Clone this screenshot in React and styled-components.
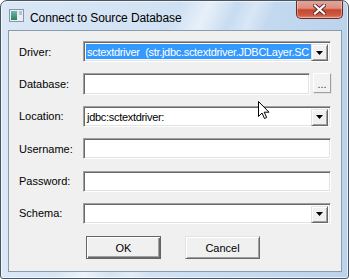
import styled, { createGlobalStyle } from "styled-components";

const Global = createGlobalStyle`
  html, body {
    margin: 0;
    padding: 0;
    background: #fff;
  }
  * {
    box-sizing: border-box;
  }
`;

/* Moldura da janela no estilo Aero */
const SJanela = styled.div`
  position: relative;
  width: 349px;
  height: 279px;
  border: 1px solid #4a5561;
  border-radius: 7px 7px 3px 3px;
  padding: 0 6px 6px 7px;
  display: flex;
  flex-direction: column;
  background:
    linear-gradient(115deg, transparent 38%, rgba(255, 255, 255, 0.55) 44%, transparent 50%,
      rgba(255, 255, 255, 0.35) 54%, transparent 58%),
    linear-gradient(90deg, #d9e7f6 0%, #d3e3f4 40%, #c6dbf1 70%, #bcd3ec 100%);
  box-shadow: inset 0 0 0 1px rgba(255, 255, 255, 0.6);
  font-family: "Liberation Sans", Arial, sans-serif;
  overflow: hidden;
`;

const STitulo = styled.div`
  height: 29px;
  display: flex;
  align-items: flex-start;
`;

const STexto = styled.span`
  font-size: 12px;
  color: #000;
  margin: 10px 0 0 22px;
  letter-spacing: -0.1px;
`;

const SIcone = styled.svg`
  position: absolute;
  left: 8px;
  top: 8px;
`;

const SFechar = styled.div`
  margin-left: auto;
  margin-right: -1px;
  width: 47px;
  height: 19px;
  margin-top: -1px;
  border: 1px solid #6b2a22;
  border-top: none;
  border-radius: 0 0 5px 5px;
  background: linear-gradient(180deg, #e8a597 0%, #dc8f80 45%, #c7462f 55%, #cf5a43 85%, #e0907c 100%);
  box-shadow: inset 0 0 0 1px rgba(255, 255, 255, 0.35);
  display: flex;
  align-items: center;
  justify-content: center;
`;

/* Area cliente do dialogo */
const SCliente = styled.div`
  flex: 1;
  background: #f0f0f0;
  border: 1px solid #8a9bae;
  padding: 10px 10px 12px 10px;
  display: flex;
  flex-direction: column;
`;

const SForm = styled.div`
  display: grid;
  grid-template-columns: 64px minmax(0, 1fr);
  grid-auto-rows: 21px;
  row-gap: 11.4px;
  align-items: center;
`;

const SLabel = styled.label`
  font-size: 11px;
  color: #000;
`;

const SCampo = styled.div`
  height: 21px;
  min-width: 0;
  display: flex;
  gap: ${(p) => (p.$gap ? "3px" : "0")};
`;

const SAfundado = styled.div`
  flex: 1;
  min-width: 0;
  height: ${(p) => (p.$alto ? "22px" : "21px")};
  background: #fff;
  border: 1px solid;
  border-color: #a0a0a0 #fff #fff #a0a0a0;
  box-shadow: inset 1px 1px 0 #696969, inset -1px -1px 0 #e3e3e3;
  padding: 2px;
  display: flex;
  font-size: 11px;
  color: #000;
`;

const SValor = styled.div`
  flex: 1;
  min-width: 0;
  white-space: pre;
  overflow: hidden;
  line-height: 17px;
  padding-left: 1px;
  letter-spacing: -0.3px;
  background: ${(p) => (p.$selecionado ? "#3399ff" : "transparent")};
  color: ${(p) => (p.$selecionado ? "#fff" : "#000")};
`;

const SSeta = styled.div`
  flex: none;
  width: 17px;
  height: 17px;
  background: #f0f0f0;
  border: 1px solid;
  border-color: #e3e3e3 #696969 #696969 #e3e3e3;
  box-shadow: inset 1px 1px 0 #fff, inset -1px -1px 0 #a0a0a0;
  display: flex;
  align-items: center;
  justify-content: center;
`;

const SReticencias = styled.div`
  flex: none;
  width: 18px;
  height: 20px;
  background: #f2f2f2;
  border: 1px solid;
  border-color: #fff #a0a0a0 #a0a0a0 #fff;
  box-shadow: 1px 1px 0 #e3e3e3;
  font-size: 11px;
  color: #7a1470;
  display: flex;
  align-items: flex-end;
  justify-content: center;
  line-height: 12px;
  padding-bottom: 2px;
`;

const SBotoes = styled.div`
  margin-top: auto;
  display: flex;
  gap: 24px;
  padding-left: 67px;
`;

const SBotao = styled.div`
  width: 75px;
  height: 23px;
  background: #f0f0f0;
  border: 1px solid;
  border-color: ${(p) => (p.$padrao ? "#646464" : "#e3e3e3 #696969 #696969 #e3e3e3")};
  box-shadow: ${(p) =>
    p.$padrao
      ? "inset 1px 1px 0 #fff, inset -1px -1px 0 #696969, inset -2px -2px 0 #a0a0a0"
      : "inset 1px 1px 0 #fff, inset -1px -1px 0 #a0a0a0"};
  font-size: 11px;
  color: #000;
  display: flex;
  align-items: center;
  justify-content: center;
`;

const SCursor = styled.svg`
  position: absolute;
  left: 256px;
  top: 99px;
`;

function Seta() {
  return (
    <svg width="7" height="4" viewBox="0 0 7 4">
      <path d="M0 0h7L3.5 4z" fill="#000" />
    </svg>
  );
}

function Combo({ valor, selecionado }) {
  return (
    <SCampo>
      <SAfundado>
        <SValor $selecionado={selecionado}>{valor}</SValor>
        <SSeta>
          <Seta />
        </SSeta>
      </SAfundado>
    </SCampo>
  );
}

function Texto() {
  return (
    <SCampo>
      <SAfundado />
    </SCampo>
  );
}

export default function App() {
  return (
    <>
      <Global />
      <SJanela>
        <SIcone width="15" height="13" viewBox="0 0 15 13">
          <defs>
            <linearGradient id="ic" x1="0" y1="0" x2="0" y2="1">
              <stop offset="0" stopColor="#6fb7b0" />
              <stop offset="1" stopColor="#2f7f5a" />
            </linearGradient>
          </defs>
          <rect x="0.5" y="0.5" width="14" height="12" fill="#e8eef4" stroke="#8a96a3" />
          <rect x="2" y="2" width="6" height="9" fill="url(#ic)" />
          <rect x="10" y="2" width="3" height="4" fill="#b9c3cc" />
        </SIcone>
        <STitulo>
          <STexto>Connect to Source Database</STexto>
          <SFechar>
            <svg width="13" height="11" viewBox="0 0 13 11">
              <path d="M2 1.5l9 8M11 1.5l-9 8" stroke="#5b2a24" strokeWidth="4" strokeLinecap="square" />
              <path d="M2 1.5l9 8M11 1.5l-9 8" stroke="#fff" strokeWidth="2.2" strokeLinecap="square" />
            </svg>
          </SFechar>
        </STitulo>
        <SCliente>
          <SForm>
            <SLabel>Driver:</SLabel>
            <Combo valor="sctextdriver  (str.jdbc.sctextdriver.JDBCLayer.SC" selecionado />
            <SLabel>Database:</SLabel>
            <SCampo $gap>
              <SAfundado $alto />
              <SReticencias>...</SReticencias>
            </SCampo>
            <SLabel>Location:</SLabel>
            <Combo valor="jdbc:sctextdriver:" />
            <SLabel>Username:</SLabel>
            <Texto />
            <SLabel>Password:</SLabel>
            <Texto />
            <SLabel>Schema:</SLabel>
            <Combo valor="" />
          </SForm>
          <SBotoes>
            <SBotao $padrao>OK</SBotao>
            <SBotao>Cancel</SBotao>
          </SBotoes>
        </SCliente>
        <SCursor width="13" height="20" viewBox="0 0 13 20">
          <path
            d="M1.5 1.5v15l3.5-3.5 2.5 5.5 2.2-1-2.5-5.3h4.8z"
            fill="#fff"
            stroke="#000"
            strokeWidth="1"
            strokeLinejoin="round"
          />
        </SCursor>
      </SJanela>
    </>
  );
}
